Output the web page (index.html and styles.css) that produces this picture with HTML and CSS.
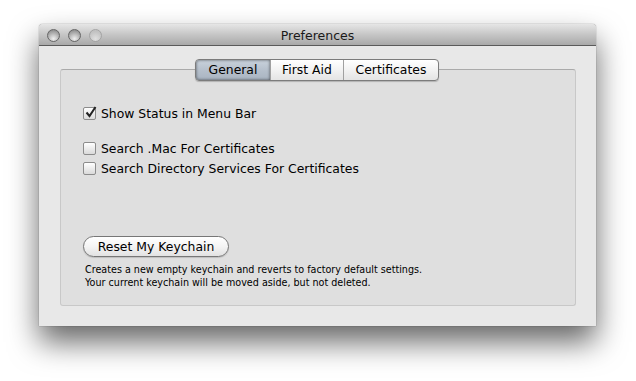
FILE: index.html
```html
<!DOCTYPE html>
<html lang="en">
<head>
    <meta charset="UTF-8">
    <title>Preferences</title>
    <link rel="stylesheet" href="styles.css">
</head>
<body>
    <div class="window">
        <!-- Titelleiste mit Ampel-Buttons -->
        <div class="titlebar">
            <div class="lights">
                <span class="light"></span>
                <span class="light"></span>
                <span class="light off"></span>
            </div>
            <div class="title">Preferences</div>
        </div>

        <div class="content">
            <div class="group">
                <!-- Segmentierte Tabs -->
                <div class="tabs">
                    <span class="tab active">General</span>
                    <span class="tab">First Aid</span>
                    <span class="tab">Certificates</span>
                </div>

                <label class="check"><span class="box">
                    <svg width="13" height="13" viewBox="0 0 13 13"><path d="M2.5 6.5 L5.5 10 L11.5 1" fill="none" stroke="#222" stroke-width="2"/></svg>
                </span>Show Status in Menu Bar</label>
                <label class="check gap"><span class="box"></span>Search .Mac For Certificates</label>
                <label class="check"><span class="box"></span>Search Directory Services For Certificates</label>

                <div class="reset">
                    <button class="pill">Reset My Keychain</button>
                    <p class="note">Creates a new empty keychain and reverts to factory default settings.<br>Your current keychain will be moved aside, but not deleted.</p>
                </div>
            </div>
        </div>
    </div>
</body>
</html>
```

FILE: styles.css
```css
/* Seite */
html {
    height: 100%;
}

body {
    margin: 0;
    min-height: 381px;
    box-sizing: border-box;
    padding: 24px 0 0 39px;
    background: #fff;
    font-family: "DejaVu Sans", Verdana, sans-serif;
    color: #000;
}

/* Fenster */
.window {
    width: 557px;
    height: 302px;
    background: #e8e8e8;
    border-radius: 4px 4px 0 0;
    box-shadow: 0 16px 30px rgba(0, 0, 0, 0.6), 0 0 1px rgba(0, 0, 0, 0.7);
    display: flex;
    flex-direction: column;
}

/* Titelleiste */
.titlebar {
    height: 21px;
    border-bottom: 1px solid #5a5a5a;
    border-radius: 4px 4px 0 0;
    background: linear-gradient(#e6e6e6, #c6c6c6 50%, #a9a9a9);
    display: flex;
    align-items: center;
    position: relative;
}

.lights {
    display: flex;
    gap: 8px;
    padding-left: 8px;
    padding-top: 1px;
}

.light {
    width: 13px;
    height: 13px;
    border-radius: 50%;
    border: 1px solid #666;
    box-sizing: border-box;
    background: radial-gradient(circle at 50% 80%, #f0f0f0, #b0b0b0 55%, #7e7e7e);
}

.light.off {
    border-color: #a4a4a4;
    background: radial-gradient(circle at 50% 80%, #e0e0e0, #c2c2c2 70%);
}

.title {
    position: absolute;
    left: 0;
    right: 0;
    top: 4px;
    text-align: center;
    font-size: 12.5px;
    color: #1a1a1a;
}

/* Inhalt */
.content {
    flex: 1;
    padding: 23px 20px 20px 21px;
}

.group {
    height: 100%;
    box-sizing: border-box;
    border: 1px solid #c8c8c8;
    border-top-color: #aaa;
    border-radius: 3px;
    background: #dfdfdf;
    padding: 33px 0 0 22px;
    position: relative;
}

/* Tabs über dem Rahmen */
.tabs {
    position: absolute;
    top: -11px;
    left: 134px;
    display: flex;
    height: 20px;
    border: 1px solid #7c7c7c;
    border-radius: 4px;
    background: linear-gradient(#ffffff, #f2f2f2 50%, #e4e4e4);
    box-shadow: 0 1px 1px rgba(0, 0, 0, 0.2);
}

.tab {
    font-size: 12.4px;
    line-height: 20px;
    text-align: center;
    box-sizing: border-box;
    border-left: 1px solid #a0a0a0;
}

.tab:nth-child(1) {
    width: 74px;
    border-left: none;
    border-radius: 3px 0 0 3px;
    background: linear-gradient(#c9d2dc, #b6c0cc 50%, #a9b4c1);
    box-shadow: inset 0 0 3px rgba(0, 0, 0, 0.6);
}

.tab:nth-child(2) {
    width: 73px;
}

.tab:nth-child(3) {
    width: 95px;
}

/* Checkboxen */
.check {
    display: flex;
    align-items: center;
    font-size: 12.4px;
    height: 20px;
    gap: 5px;
}

.check.gap {
    margin-top: 15px;
}

.box {
    width: 13px;
    height: 13px;
    box-sizing: border-box;
    border: 1px solid #8c8c8c;
    border-radius: 2px;
    background: linear-gradient(#ffffff, #ececec 50%, #dadada);
    position: relative;
}

.box svg {
    position: absolute;
    left: 0;
    top: -2px;
}

/* Zurücksetzen */
.reset {
    margin-top: 58px;
}

.pill {
    font-family: inherit;
    font-size: 12.4px;
    height: 21px;
    width: 146px;
    padding: 0;
    border: 1px solid #777;
    border-radius: 11px;
    background: linear-gradient(#ffffff, #f4f4f4 50%, #e2e2e2);
    box-shadow: 0 1px 1px rgba(0, 0, 0, 0.15);
    color: #000;
}

.note {
    margin: 6px 0 0 2px;
    font-size: 9.6px;
    line-height: 13px;
}
```
